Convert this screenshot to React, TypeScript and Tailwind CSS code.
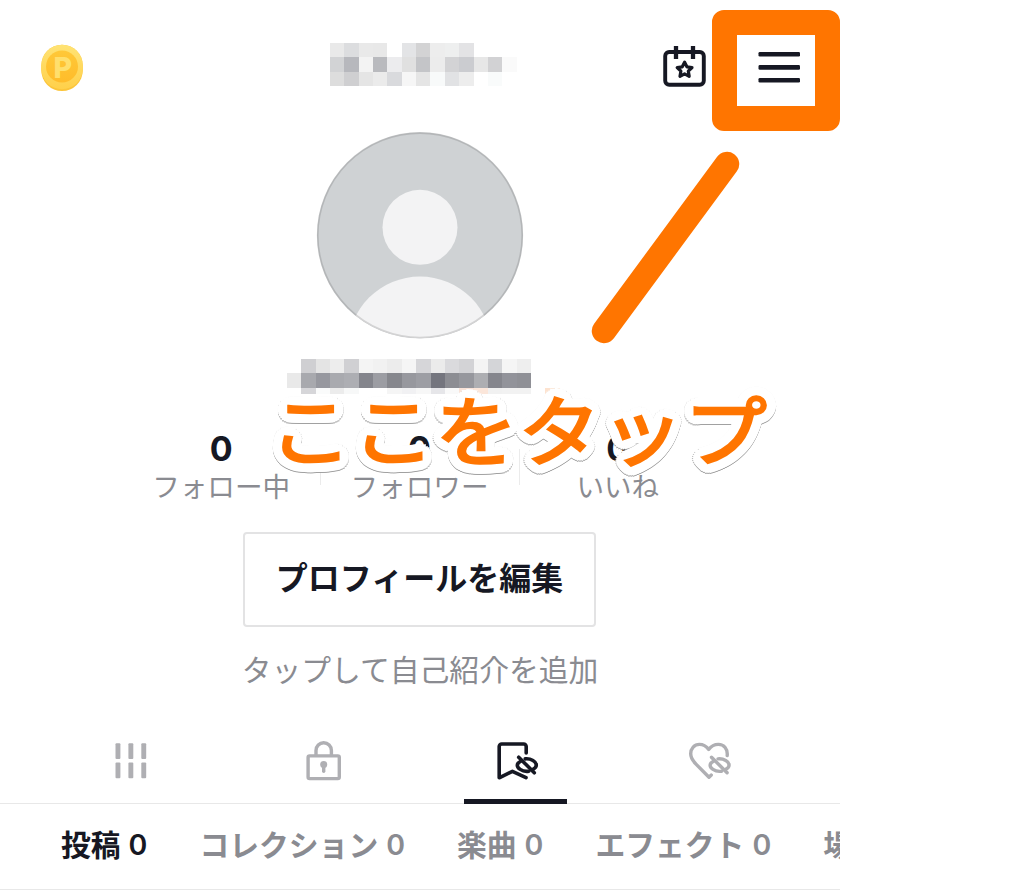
import React from 'react';

const CELL = 14.35;

const nameMosaic = [
  ['#e9e9e9', '#dcdddf', '#e9e9e9', '#e8e8e8', '', '#e3e4e6', '#d3d3d4', '#ededed', '#eeefef', '#e3e3e5', '', '', ''],
  ['#d2d3d5', '#b7b8bd', '#f3f3f3', '#b9babe', '#ececee', '#e0e0e0', '#c4c5c8', '#ececec', '#d3d3d5', '#cbccd0', '#e7e7e7', '#d2d2d4', '#fafafa'],
  ['#dddddd', '#cfcfd1', '#e5e5e5', '#ebebeb', '#d9dadd', '#f6f6f6', '#e5e5e5', '#f8fafa', '#e1e2e4', '#ededed', '', '#f9fbfb', ''],
];

const handleMosaic = [
  ['', '#cfcfd2', '#e4e4e4', '#ededed', '#d0d0d3', '#f4f4f4', '#f1f1f1', '#ececec', '#f5f5f5', '#d6d6d9', '#ebebeb', '#dadadd', '#d3d3d6', '#f4f4f4', '#d4d5d8', '#f5f5f5', '#eeeeee'],
  ['#e9e9e9', '#a8a9ae', '#97989f', '#a9aaaf', '#adaeb3', '#84858c', '#9c9da3', '#86878d', '#97989e', '#9d9ea4', '#74757e', '#8c8d93', '#96979d', '#adaeb2', '#85868d', '#92939a', '#8f9096'],
  ['', '#d6d6d9', '#fafbfb', '#ececec', '#f7f8f8', '', '', '#f5f5f5', '#f1f1f3', '#f7f7f7', '#e6e6e9', '#f9f9f9', '#f9e3d8', '#fbe6da', '#f1f1f1', '#f2f2f2', '#f2f2f2', '', '#fde3d0'],
];

const stats = [
  { value: '0', label: 'フォロー中' },
  { value: '0', label: 'フォロワー' },
  { value: '0', label: 'いいね' },
];

const subTabs = [
  { label: '投稿', count: '0', active: true },
  { label: 'コレクション', count: '0' },
  { label: '楽曲', count: '0' },
  { label: 'エフェクト', count: '0' },
  { label: '場', count: '' },
];

// White halo around the callout text: two rings of hard shadows
const halo = [10.5, 5.5]
  .flatMap(r =>
    Array.from({ length: 28 }, (_, i) => {
      const a = (i / 28) * Math.PI * 2;
      return `${(Math.cos(a) * r).toFixed(2)}px ${(Math.sin(a) * r).toFixed(2)}px 0 #fff`;
    })
  )
  .join(', ');

const Mosaic: React.FC<{ rows: string[][]; width: number; height: number; className: string }> = ({ rows, width, height, className }) => (
  <svg className={className} width={width} height={height} shapeRendering="crispEdges">
    {rows.map((row, y) =>
      row.map((color, x) =>
        color ? <rect key={`${x}-${y}`} x={x * CELL} y={y * CELL} width={CELL} height={CELL} fill={color} /> : null
      )
    )}
  </svg>
);

const CoinIcon = () => (
  <svg className="mt-[1px] ml-[41px] shrink-0" width="42" height="48" viewBox="41 44 42 48">
    <defs>
      <linearGradient id="face" x1="0" y1="0" x2="0" y2="1">
        <stop offset="0" stopColor="#ffe374" />
        <stop offset="1" stopColor="#ffd04a" />
      </linearGradient>
      <linearGradient id="inner" x1="0" y1="0" x2="0" y2="1">
        <stop offset="0" stopColor="#ffc838" />
        <stop offset="1" stopColor="#ffbc2a" />
      </linearGradient>
    </defs>
    <rect x="41.3" y="44.7" width="41.5" height="46.3" rx="20.7" fill="#fcc53a" />
    <rect x="41.3" y="44.7" width="41.5" height="44.5" rx="20.7" fill="url(#face)" />
    <circle cx="62" cy="66.5" r="16" fill="url(#inner)" />
    <text x="53.4" y="77.5" fontFamily="Inter, sans-serif" fontWeight="800" fontSize="28.5" fill="#ffdf6c">P</text>
  </svg>
);

const CalendarIcon = () => (
  <svg className="mt-[2px] ml-[146px] shrink-0" width="44" height="43" viewBox="663 45 44 43" fill="none" stroke="#161823">
    <rect x="665.2" y="52" width="38.6" height="32.8" rx="4" strokeWidth="3.9" />
    <path d="M676 46v13M693 46v13" strokeWidth="4.3" />
    <path
      d="M684.6 62.1l2.3 4.7 5.1.7-3.7 3.6.9 5.2-4.6-2.4-4.6 2.4.9-5.2-3.7-3.6 5.1-.7z"
      strokeWidth="3.2"
      strokeLinejoin="round"
    />
  </svg>
);

const MenuIcon = () => (
  <svg className="mt-[9px] ml-[51px] shrink-0" width="42" height="31" fill="#161823">
    <rect x="0.5" y="0" width="41.5" height="4.6" rx="1.3" />
    <rect x="0.5" y="13.1" width="41.5" height="4.6" rx="1.3" />
    <rect x="0.5" y="26" width="41.5" height="4.6" rx="1.3" />
  </svg>
);

const Avatar = () => (
  <svg className="mx-auto block" width="208" height="208" viewBox="0 0 208 208">
    <defs>
      <clipPath id="avatarClip">
        <circle cx="104" cy="103.3" r="103" />
      </clipPath>
    </defs>
    <g clipPath="url(#avatarClip)">
      <rect width="208" height="208" fill="#cfd2d4" />
      <circle cx="104" cy="95.3" r="37.5" fill="#f3f3f4" />
      <circle cx="104" cy="216.5" r="72" fill="#f3f3f4" />
    </g>
    <circle cx="104" cy="103.3" r="102.3" fill="none" stroke="#000" strokeOpacity="0.13" strokeWidth="1.8" />
  </svg>
);

const GridIcon = () => (
  <svg width="44" height="44" viewBox="109 739 44 44" fill="#afafb3">
    {[115.5, 128.4, 141.3].map(x => (
      <React.Fragment key={x}>
        <rect x={x} y="743.2" width="4.9" height="15.7" rx="1" />
        <rect x={x} y="762.6" width="4.9" height="15.7" rx="1" />
      </React.Fragment>
    ))}
  </svg>
);

const LockIcon = () => (
  <svg width="44" height="44" viewBox="302 739 44 44" fill="none" stroke="#afafb3" strokeWidth="3.4">
    <rect x="308.1" y="755.9" width="31.2" height="22.7" rx="1.5" />
    <path d="M316 755.5v-5a7.7 7.7 0 0 1 15.4 0v5" />
    <circle cx="323.7" cy="764.4" r="3.5" fill="#afafb3" stroke="none" />
    <path d="M323.7 765v6.2" strokeLinecap="round" />
  </svg>
);

const HiddenEye = () => (
  <>
    <path d="M521 761c-2.4 1.3-3.7 2.8-3.7 4.2 0 2.9 4.5 6.2 9.4 6.2.8 0 1.5-.1 2.2-.2" />
    <path d="M525.2 758.9c5.8-.6 11.1 2.9 11.1 6 0 1.7-1.3 3.2-3.2 4.3" />
    <path d="M518.7 757.2l15.6 15.6" />
  </>
);

const BookmarkIcon = () => (
  <svg width="44" height="44" viewBox="495 739 44 44" fill="none" stroke="#161823" strokeWidth="3.6" strokeLinecap="round" strokeLinejoin="round">
    <path d="M526.2 753v-6.5a2.5 2.5 0 0 0-2.5-2.5h-22a2.5 2.5 0 0 0-2.5 2.5v31.3l13.2-6.4 13.6 6.3" />
    <HiddenEye />
  </svg>
);

const HeartIcon = () => (
  <svg width="44" height="44" viewBox="688 739 44 44" fill="none" stroke="#afafb3" strokeWidth="3.4" strokeLinecap="round" strokeLinejoin="round">
    <path d="M727.2 755.5c.7-6.5-3.3-11.1-8.8-11.1-4 0-7.2 1.7-9.7 5-2.5-3.3-5.7-5-9.3-5-5 0-8.7 4-8.7 9.4 0 3.9 1.8 6.7 5.3 10.3l13 13.2 2.3-2.2" />
    <g transform="translate(192.8 0)">
      <HiddenEye />
    </g>
  </svg>
);

const tabs = [
  { id: 'posts', icon: <GridIcon /> },
  { id: 'private', icon: <LockIcon /> },
  { id: 'saved', icon: <BookmarkIcon />, active: true },
  { id: 'liked', icon: <HeartIcon /> },
];

const App: React.FC = () => {
  return (
    <div className="min-h-screen bg-white">
      <div className="relative h-[895px] w-[840px] overflow-hidden font-['Noto_Sans_CJK_JP',sans-serif] text-[#161823]">
        <header className="flex h-[132px] items-start pt-[43px]">
          <CoinIcon />
          <Mosaic className="ml-[247px] shrink-0" rows={nameMosaic} width={187} height={43} />
          <CalendarIcon />
          <MenuIcon />
        </header>

        <Avatar />
        <Mosaic className="mt-[19px] ml-[287px]" rows={handleMosaic} width={273} height={35} />

        {/* Follower stats */}
        <div className="relative ml-[122px] grid h-[138px] w-[595px] grid-cols-3 pt-[33px]">
          {stats.map((stat, i) => (
            <div key={stat.label} className="relative text-center">
              <div className="font-['Inter',sans-serif] text-[34px] leading-[44px] font-bold">{stat.value}</div>
              <div className="relative z-20 -mt-[3px] text-[27.6px] leading-[34px] whitespace-nowrap text-[#8a8b91]">{stat.label}</div>
              {i > 0 && <span className="absolute top-[22px] left-0 h-[36px] w-px bg-[#ebebeb]" />}
            </div>
          ))}
        </div>

        <button className="ml-[243px] flex h-[95px] w-[353px] items-center justify-center rounded-[4px] border-2 border-[#e3e3e4] pb-[8px] text-[32px] font-bold whitespace-nowrap">
          プロフィールを編集
        </button>
        <p className="mt-[19px] text-center text-[29.8px] leading-[44px] text-[#8a8b91]">タップして自己紹介を追加</p>

        <nav className="mt-[29px] h-[85px] border-b border-[#e8e8e8] px-[34px]">
          <div className="grid h-[85px] grid-cols-4">
            {tabs.map(tab => (
              <button key={tab.id} className="relative flex items-start justify-center pt-[20px]">
                {tab.icon}
                {tab.active && <span className="absolute bottom-0 left-[44px] h-[5px] w-[103px] bg-[#161823]" />}
              </button>
            ))}
          </div>
        </nav>

        <div className="flex h-[86px] items-center gap-[52px] overflow-hidden border-b border-[#e8e8e8] pb-[6px] pl-[61px] text-[29.8px] font-bold whitespace-nowrap">
          {subTabs.map(tab => (
            <div key={tab.label} className={tab.active ? 'flex shrink-0 items-center gap-[8px]' : 'flex shrink-0 items-center gap-[8px] text-[#8a8b91]'}>
              <span>{tab.label}</span>
              {tab.count && <span className="pt-[4px] font-['Inter',sans-serif] text-[28.5px] font-semibold">{tab.count}</span>}
            </div>
          ))}
        </div>

        {/* Tutorial callout */}
        <div className="absolute top-[10px] right-0 h-[121px] w-[128px] rounded-[12px] border-[25px] border-[#ff7500]" />
        <svg className="absolute top-[140px] left-[580px]" width="170" height="210" viewBox="580 140 170 210">
          <path d="M727 164L604 331" stroke="#ff7500" strokeWidth="24.5" strokeLinecap="round" />
        </svg>
        <div
          className="absolute top-[367px] left-[269px] scale-y-[0.92] text-[83px] leading-[120px] font-normal whitespace-nowrap text-[#ff7500] drop-shadow-[0.5px_1px_0.5px_#999999] [-webkit-text-stroke:2.5px_#ff7500]"
          style={{ textShadow: halo }}
        >
          ここをタップ
        </div>
      </div>
    </div>
  );
};

export default App;
